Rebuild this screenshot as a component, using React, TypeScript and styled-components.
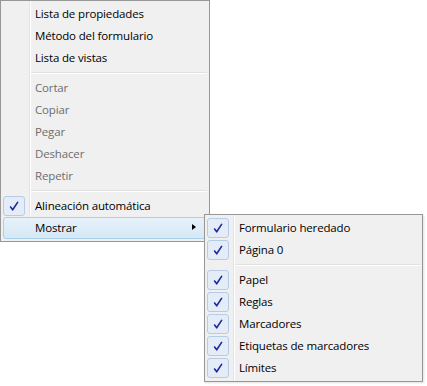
import { FC } from "react";
import styled, { createGlobalStyle } from "styled-components";

interface EntryInterface {
  label?: string;
  checked?: boolean;
  disabled?: boolean;
  active?: boolean;
  submenu?: boolean;
  separator?: boolean;
}

const GlobalStyle = createGlobalStyle`
  html, body {
    margin: 0;
    padding: 0;
    background: #ffffff;
  }
  body {
    font-family: "Open Sans", "Noto Sans", sans-serif;
    font-size: 11.5px;
    letter-spacing: -0.15px;
  }
`;

const Stage = styled.div`
  position: relative;
  width: 427px;
  height: 386px;
`;

const MenuBox = styled.div<{ $width: number }>`
  box-sizing: border-box;
  width: ${(p) => p.$width}px;
  padding: 2px;
  border: 1px solid #979797;
  background-color: #f0f0f0;
  background-image: linear-gradient(
    to right,
    transparent 28px,
    #e2e3e3 28px,
    #e2e3e3 29px,
    #ffffff 29px,
    #ffffff 30px,
    transparent 30px
  );
  display: flex;
  flex-direction: column;
`;

const SubMenu = styled(MenuBox)`
  position: absolute;
  left: 204px;
  top: 214px;
  box-shadow: 1px 1px 2px rgba(0, 0, 0, 0.12);
`;

const Item = styled.div<{ $active?: boolean; $disabled?: boolean }>`
  position: relative;
  box-sizing: border-box;
  height: 22px;
  display: flex;
  align-items: center;
  border: 1px solid ${(p) => (p.$active ? "#a9cfe9" : "transparent")};
  border-radius: 3px;
  background: ${(p) =>
    p.$active ? "linear-gradient(#e6f1fa, #d6e8f6)" : "transparent"};
  color: ${(p) => (p.$disabled ? "#6d6d6d" : "#000000")};
  white-space: nowrap;
`;

const CheckSlot = styled.div<{ $on?: boolean }>`
  box-sizing: border-box;
  width: 22px;
  height: 20px;
  margin-left: -1px;
  display: flex;
  align-items: center;
  justify-content: center;
  border-radius: 3px;
  border: 1px solid ${(p) => (p.$on ? "#b6cbe6" : "transparent")};
  background: ${(p) => (p.$on ? "#e4ecf7" : "transparent")};
`;

const Label = styled.span`
  margin-left: 10px;
  line-height: 20px;
`;

const Arrow = styled.span`
  position: absolute;
  right: 10px;
  top: 6px;
  width: 0;
  height: 0;
  border-top: 3.5px solid transparent;
  border-bottom: 3.5px solid transparent;
  border-left: 4px solid #000000;
`;

const Separator = styled.div`
  height: 8px;
  margin-left: 28px;
  display: flex;
  flex-direction: column;
  justify-content: center;
  &::before {
    content: "";
    display: block;
    height: 1px;
    background: #e0e0e0;
  }
  &::after {
    content: "";
    display: block;
    height: 1px;
    background: #ffffff;
  }
`;

const Tick: FC = () => (
  <svg width="10" height="11" viewBox="0 0 10 11">
    <path
      d="M1.6 6 L3.7 8.8 L8.6 1.4"
      fill="none"
      stroke="#1c2a9c"
      strokeWidth="1.6"
      strokeLinecap="round"
      strokeLinejoin="round"
    />
  </svg>
);

const Entry: FC<EntryInterface> = (props: EntryInterface) => {
  const { label, checked, disabled, active, submenu, separator } = props;
  if (separator) return <Separator />;
  return (
    <Item $active={active} $disabled={disabled}>
      <CheckSlot $on={checked}>{checked && <Tick />}</CheckSlot>
      <Label>{label}</Label>
      {submenu && <Arrow />}
    </Item>
  );
};

const mainItems: EntryInterface[] = [
  { label: "Lista de propiedades" },
  { label: "Método del formulario" },
  { label: "Lista de vistas" },
  { separator: true },
  { label: "Cortar", disabled: true },
  { label: "Copiar", disabled: true },
  { label: "Pegar", disabled: true },
  { label: "Deshacer", disabled: true },
  { label: "Repetir", disabled: true },
  { separator: true },
  { label: "Alineación automática", checked: true },
  { label: "Mostrar", active: true, submenu: true },
];

const subItems: EntryInterface[] = [
  { label: "Formulario heredado", checked: true },
  { label: "Página 0", checked: true },
  { separator: true },
  { label: "Papel", checked: true },
  { label: "Reglas", checked: true },
  { label: "Marcadores", checked: true },
  { label: "Etiquetas de marcadores", checked: true },
  { label: "Límites", checked: true },
];

const App: FC = () => (
  <>
    <GlobalStyle />
    <Stage>
      <MenuBox $width={210}>
        {mainItems.map((it, i) => (
          <Entry key={i} {...it} />
        ))}
      </MenuBox>
      <SubMenu $width={219}>
        {subItems.map((it, i) => (
          <Entry key={i} {...it} />
        ))}
      </SubMenu>
    </Stage>
  </>
);

export default App;
